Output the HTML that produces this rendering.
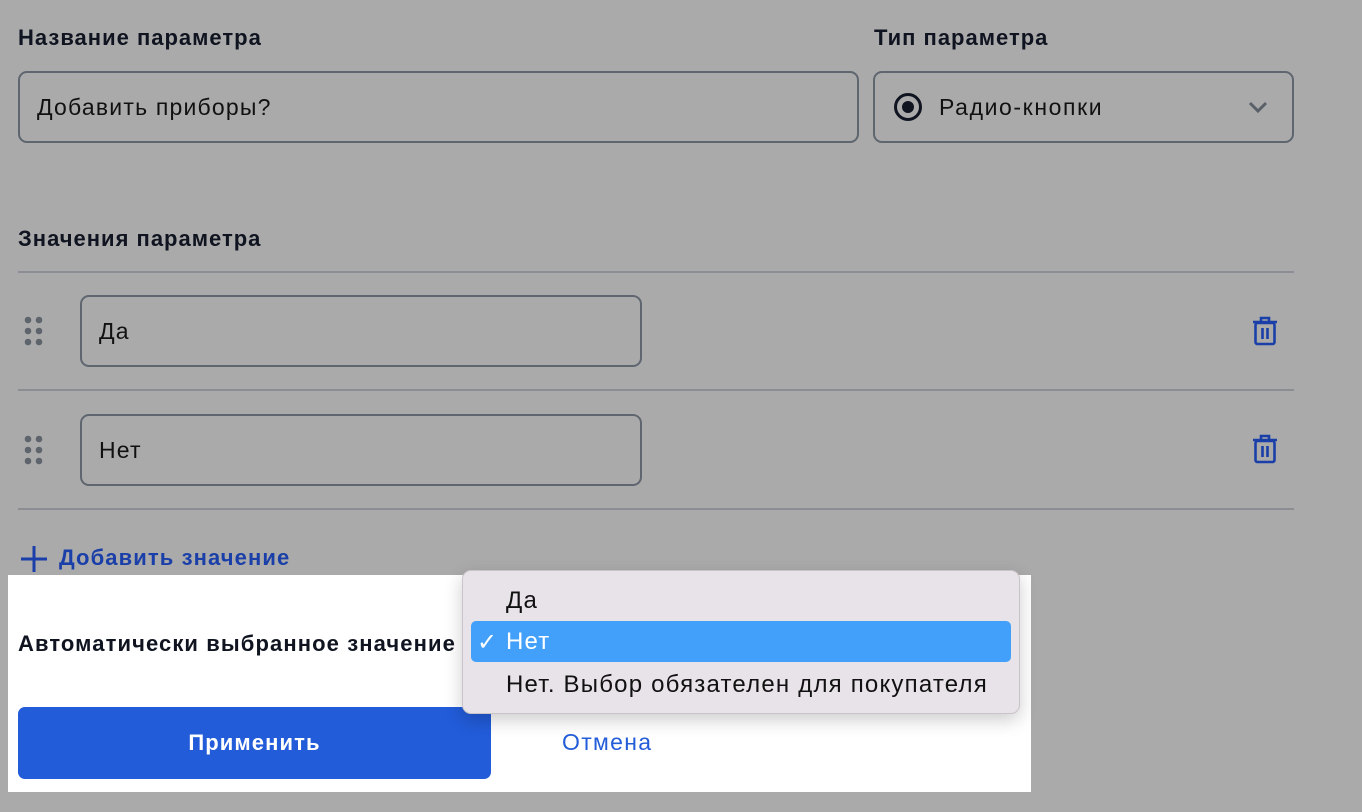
<!DOCTYPE html>
<html><head><meta charset="utf-8"><style>
*{box-sizing:border-box;margin:0;padding:0}
body{width:1362px;height:812px;background:#aaaaaa;font-family:"Liberation Sans","DejaVu Sans",sans-serif;position:relative;overflow:hidden;color:#111}
.abs{position:absolute}
.lbl{font-size:22px;font-weight:bold;color:#0f1420;letter-spacing:1px}
.inp{border:2px solid #5f6670;border-radius:9px;font-size:23px;letter-spacing:1.2px;color:#111;display:flex;align-items:center;padding-left:17px}
.hr{height:2px;background:#8a8d92;left:18px;width:1276px}
.opt{font-size:24px;letter-spacing:1.2px}
</style></head><body>
<div class="abs lbl" style="left:18px;top:25px">Название параметра</div>
<div class="abs lbl" style="left:874px;top:25px">Тип параметра</div>
<div class="abs inp" style="left:18px;top:71px;width:841px;height:72px">Добавить приборы?</div>
<div class="abs inp" style="left:873px;top:71px;width:421px;height:72px;padding-left:64px;letter-spacing:1.6px">Радио-кнопки</div>
<svg class="abs" style="left:892px;top:91px" width="32" height="32" viewBox="0 0 32 32"><circle cx="16" cy="16" r="12.5" fill="none" stroke="#0f1420" stroke-width="3"/><circle cx="16" cy="16" r="6" fill="#0f1420"/></svg>
<svg class="abs" style="left:1248px;top:100px" width="20" height="14" viewBox="0 0 20 14"><path d="M2 3l8 8 8-8" fill="none" stroke="#5a6068" stroke-width="3"/></svg>

<div class="abs lbl" style="left:18px;top:226px">Значения параметра</div>
<div class="abs hr" style="top:271px"></div>
<div class="abs hr" style="top:389px"></div>
<div class="abs hr" style="top:508px"></div>

<svg class="abs" style="left:24px;top:316px" width="20" height="32" viewBox="0 0 20 32"><g fill="#5e646c"><circle cx="4" cy="4" r="3.3"/><circle cx="15" cy="4" r="3.3"/><circle cx="4" cy="15" r="3.3"/><circle cx="15" cy="15" r="3.3"/><circle cx="4" cy="26" r="3.3"/><circle cx="15" cy="26" r="3.3"/></g></svg>
<svg class="abs" style="left:24px;top:435px" width="20" height="32" viewBox="0 0 20 32"><g fill="#5e646c"><circle cx="4" cy="4" r="3.3"/><circle cx="15" cy="4" r="3.3"/><circle cx="4" cy="15" r="3.3"/><circle cx="15" cy="15" r="3.3"/><circle cx="4" cy="26" r="3.3"/><circle cx="15" cy="26" r="3.3"/></g></svg>

<div class="abs inp" style="left:80px;top:295px;width:562px;height:72px">Да</div>
<div class="abs inp" style="left:80px;top:414px;width:562px;height:72px">Нет</div>

<svg class="abs" style="left:1252px;top:315px" width="26" height="32" viewBox="0 0 26 32"><g fill="none" stroke="#1a3fa8" stroke-width="2.6"><path d="M1 7h24M9 7V3h8v4"/><rect x="3.5" y="8" width="19" height="21" rx="2"/><path d="M10.5 13v11M15.5 13v11"/></g></svg>
<svg class="abs" style="left:1252px;top:433px" width="26" height="32" viewBox="0 0 26 32"><g fill="none" stroke="#1a3fa8" stroke-width="2.6"><path d="M1 7h24M9 7V3h8v4"/><rect x="3.5" y="8" width="19" height="21" rx="2"/><path d="M10.5 13v11M15.5 13v11"/></g></svg>

<svg class="abs" style="left:20px;top:545px" width="28" height="28" viewBox="0 0 28 28"><path d="M14 1v26M1 14h26" stroke="#1a3fa8" stroke-width="3"/></svg>
<div class="abs" style="left:59px;top:545px;font-size:22px;font-weight:bold;color:#1a3fa8;letter-spacing:1.1px">Добавить значение</div>

<div class="abs" style="left:8px;top:575px;width:1023px;height:217px;background:#fff"></div>
<div class="abs lbl" style="left:18px;top:631px;letter-spacing:1.1px">Автоматически выбранное значение</div>
<div class="abs" style="left:18px;top:707px;width:473px;height:72px;background:#225cd9;border-radius:7px;color:#fff;font-size:22px;font-weight:bold;letter-spacing:1.1px;display:flex;align-items:center;justify-content:center">Применить</div>
<div class="abs" style="left:562px;top:729px;font-size:23px;letter-spacing:1.3px;color:#225cd9">Отмена</div>

<div class="abs" style="left:462px;top:570px;width:558px;height:144px;background:#e8e3e8;border:1px solid #c8c4c8;border-radius:9px;box-shadow:0 6px 18px rgba(0,0,0,0.2)"></div>
<div class="abs opt" style="left:506px;top:587px;color:#111">Да</div>
<div class="abs" style="left:471px;top:621px;width:540px;height:41px;background:#42a0fb;border-radius:5px"></div>
<div class="abs opt" style="left:477px;top:628px;color:#fff">✓</div>
<div class="abs opt" style="left:506px;top:628px;color:#fff">Нет</div>
<div class="abs opt" style="left:506px;top:671px;color:#111">Нет. Выбор обязателен для покупателя</div>
</body></html>
